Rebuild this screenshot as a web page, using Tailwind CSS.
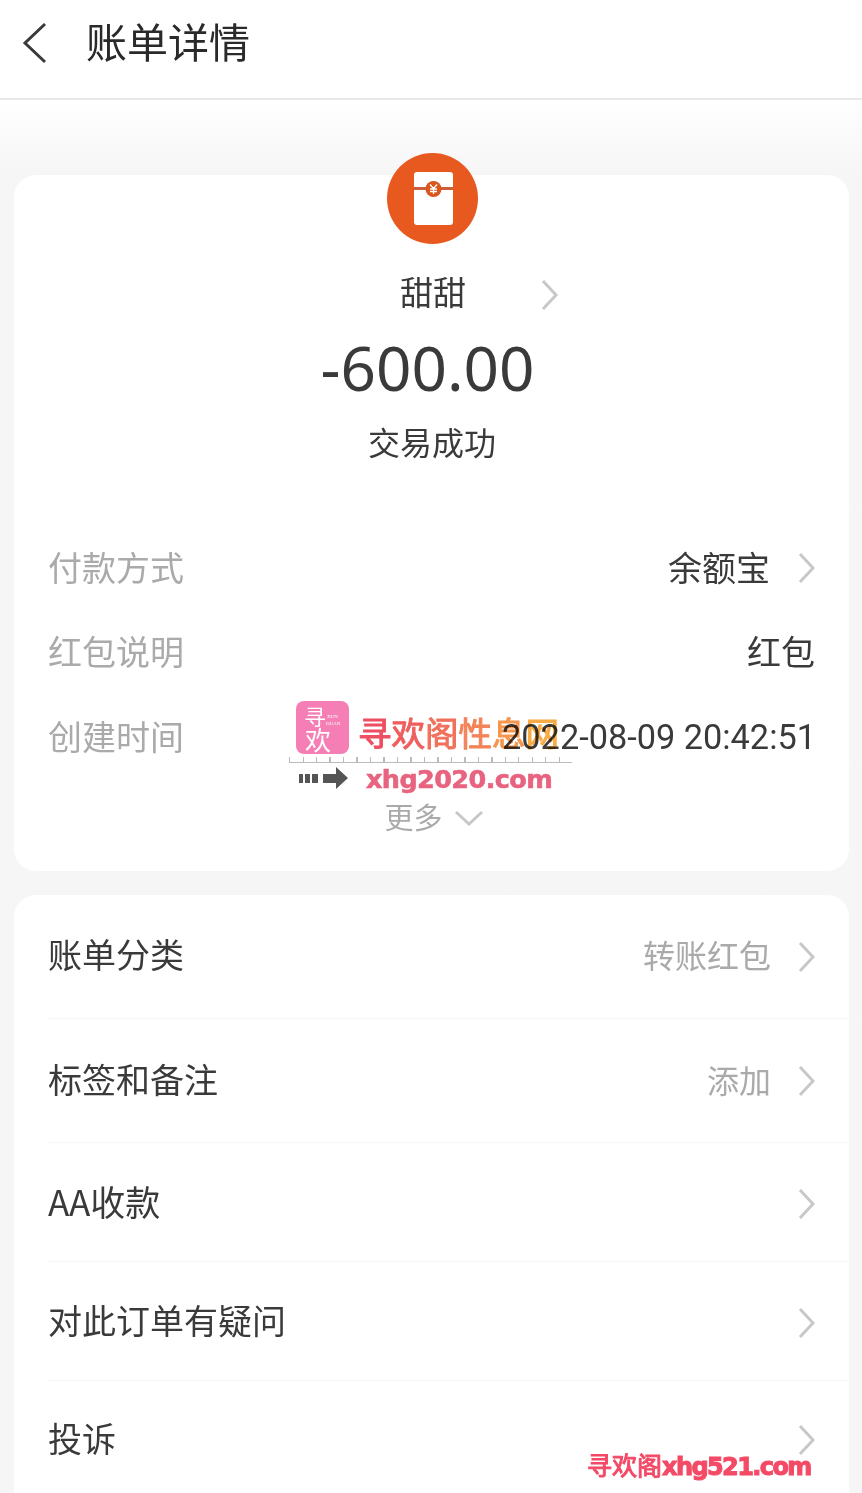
<!DOCTYPE html>
<html lang="zh-CN">
<head>
    <meta charset="UTF-8">
    <meta name="viewport" content="width=device-width, initial-scale=1.0">
    <title>账单详情</title>
    <script src="https://cdn.jsdelivr.net/npm/@tailwindcss/browser@4"></script>
</head>
<body class="font-['Noto_Sans_CJK_SC','Noto_Sans',sans-serif] bg-[#f6f6f6]">
<div class="relative w-[862px] h-[1493px] overflow-hidden bg-linear-to-b from-white from-[100px] to-[#f6f6f6] to-[175px]">

    <!-- header -->
    <header class="h-[100px] bg-white border-b-2 border-[#e8e8e8] flex items-center">
        <svg class="ml-[21px] mb-[13px]" width="26" height="42" viewBox="0 0 26 42" fill="none" stroke="#3a3a3a" stroke-width="3"><path d="M24 2 L4 21 L24 40"/></svg>
        <h1 class="ml-[39px] mb-[17px] text-[41px] leading-none text-[#2a2a2a]">账单详情</h1>
    </header>

    <!-- summary card -->
    <section class="ml-[14px] mr-[13px] mt-[75px] h-[696px] bg-white rounded-[22px] flex flex-col">
        <div class="self-center -mt-[22px] ml-[2px] w-[91px] h-[91px] rounded-full bg-[#e8591f] flex items-center justify-center shrink-0">
            <svg class="ml-[1px]" width="39" height="53" viewBox="0 0 39 53">
                <rect width="39" height="53" rx="3" fill="#fff"/>
                <rect y="15" width="39" height="3" fill="#c9603a"/>
                <circle cx="19.5" cy="17" r="8" fill="#d9561e"/>
                <path d="M16 12.5 L19.5 16.5 L23 12.5 M19.5 16.5 V22 M16 17 H23 M16 19.5 H23" fill="none" stroke="#fff" stroke-width="1.3"/>
            </svg>
        </div>
        <div class="relative self-center mt-[23px] ml-[3px] text-[33px] leading-[48px] text-[#3a3a3a]">甜甜
            <svg class="absolute left-[141px] top-[12px]" width="18" height="32" viewBox="0 0 18 32" fill="none" stroke="#c8c8c8" stroke-width="3"><path d="M2 2 L15 16 L2 30"/></svg>
        </div>
        <div class="self-center mt-[13px] font-['Noto_Sans',sans-serif] text-[62px] leading-[78px] text-[#3a3a3a] ml-[-8px]">-600.00</div>
        <div class="self-center mt-[12px] text-[32px] leading-[46px] text-[#3a3a3a] ml-[1px]">交易成功</div>

        <div class="mt-[78px] px-[34px] flex flex-col text-[34px]">
            <div class="h-[48px] flex items-center justify-between">
                <span class="text-[#aaa]">付款方式</span>
                <span class="flex items-center text-[#3a3a3a]">余额宝<svg class="ml-[28px] mt-[4px]" width="17" height="32" viewBox="0 0 17 32" fill="none" stroke="#c8c8c8" stroke-width="3"><path d="M2 2 L15 16 L2 30"/></svg></span>
            </div>
            <div class="mt-[36px] h-[48px] flex items-center justify-between">
                <span class="text-[#aaa]">红包说明</span>
                <span class="text-[#3a3a3a]">红包</span>
            </div>
            <div class="mt-[37px] h-[48px] flex items-center justify-between">
                <span class="text-[#aaa]">创建时间</span>
                <span class="font-['Roboto',sans-serif] text-[34.3px] text-[#3a3a3a] mt-[5px] -mr-[1px]">2022-08-09 20:42:51</span>
            </div>
        </div>
        <div class="mt-[36px] self-center flex items-center text-[29px] leading-[42px] text-[#aaa] ml-[5px]">更多
            <svg class="ml-[11px] mt-[3px]" width="30" height="16" viewBox="0 0 30 16" fill="none" stroke="#c8c8c8" stroke-width="3"><path d="M2 2 L15 14 L28 2"/></svg>
        </div>
    </section>

    <!-- actions card -->
    <section class="ml-[14px] mr-[13px] mt-[24px] bg-white rounded-t-[22px] pl-[34px] text-[34px] text-[#3a3a3a]">
        <div class="h-[124px] flex items-center justify-between border-b border-[#f6f6f6]">
            <span class="mb-[6px]">账单分类</span>
            <span class="flex items-center text-[#aaa] text-[32px]"><span class="mb-[6px]">转账红包</span><svg class="ml-[27px] mr-[34px]" width="17" height="32" viewBox="0 0 17 32" fill="none" stroke="#c8c8c8" stroke-width="3"><path d="M2 2 L15 16 L2 30"/></svg></span>
        </div>
        <div class="h-[124px] flex items-center justify-between border-b border-[#f6f6f6]">
            <span class="mb-[4px]">标签和备注</span>
            <span class="flex items-center text-[#aaa] text-[32px]"><span class="mb-[4px]">添加</span><svg class="ml-[27px] mr-[34px]" width="17" height="32" viewBox="0 0 17 32" fill="none" stroke="#c8c8c8" stroke-width="3"><path d="M2 2 L15 16 L2 30"/></svg></span>
        </div>
        <div class="h-[119px] flex items-center justify-between border-b border-[#f6f6f6]">
            <span class="mb-[2px] text-[35px]">AA收款</span>
            <svg class="mr-[34px] mt-[3px]" width="17" height="32" viewBox="0 0 17 32" fill="none" stroke="#c8c8c8" stroke-width="3"><path d="M2 2 L15 16 L2 30"/></svg>
        </div>
        <div class="h-[119px] flex items-center justify-between border-b border-[#f6f6f6]">
            <span class="mb-[4px]">对此订单有疑问</span>
            <svg class="mr-[34px] mt-[3px]" width="17" height="32" viewBox="0 0 17 32" fill="none" stroke="#c8c8c8" stroke-width="3"><path d="M2 2 L15 16 L2 30"/></svg>
        </div>
        <div class="h-[112px] flex items-center justify-between">
            <span>投诉</span>
            <svg class="mr-[34px] mt-[6px]" width="17" height="32" viewBox="0 0 17 32" fill="none" stroke="#c8c8c8" stroke-width="3"><path d="M2 2 L15 16 L2 30"/></svg>
        </div>
    </section>

    <!-- watermark overlay -->
    <div class="absolute left-[296px] top-[701px] w-[53px] h-[53px] rounded-[8px] bg-[#f57fb5] text-white leading-none">
        <span class="absolute left-[8px] top-[3px] text-[22px]">寻</span>
        <span class="absolute left-[9px] top-[25px] text-[26px]">欢</span>
        <span class="absolute left-[31px] top-[13px] text-[5px] font-['Liberation_Serif',serif]">XUN</span>
        <span class="absolute left-[30px] top-[20px] text-[5px] font-['Liberation_Serif',serif]">DUAN</span>
    </div>
    <div class="absolute left-[358px] top-[711px] text-[33.5px] leading-[42px] mix-blend-multiply flex [&>span]:[-webkit-text-stroke:1px_currentColor]">
        <span class="text-[#ee4f62]">寻</span><span class="text-[#ef5f5e]">欢</span><span class="text-[#f1715c]">阁</span><span class="text-[#f38358]">性</span><span class="text-[#f59650]">息</span><span class="text-[#f8ab45]">网</span>
    </div>
    <div class="absolute left-[289px] top-[757px] w-[283px] h-[6px] border-b border-[#bbb] bg-[repeating-linear-gradient(90deg,#bbb_0,#bbb_1px,transparent_1px,transparent_13.5px)]"></div>
    <svg class="absolute left-[299px] top-[767px]" width="50" height="22" viewBox="0 0 50 22" fill="#555"><rect y="7" width="4" height="9"/><rect x="6" y="7" width="5" height="9"/><rect x="13" y="7" width="6" height="9"/><path d="M24 7 H37 V0 L49 11 L37 22 V16 H24 Z"/></svg>
    <div class="absolute left-[366px] top-[762px] text-[25.5px] leading-[34px] font-bold font-['DejaVu_Sans',sans-serif] text-[#e8637f] tracking-[-0.6px] [-webkit-text-stroke:0.6px_#e8637f]">xhg2020.com</div>
    <div class="absolute left-[587px] top-[1447px] text-[25px] leading-[34px] text-[#f44a66] [-webkit-text-stroke:1px_#f44a66]">寻欢阁<span class="font-bold font-['DejaVu_Sans',sans-serif] text-[24px] tracking-[-1.6px]">xhg521.com</span></div>
</div>
</body>
</html>
